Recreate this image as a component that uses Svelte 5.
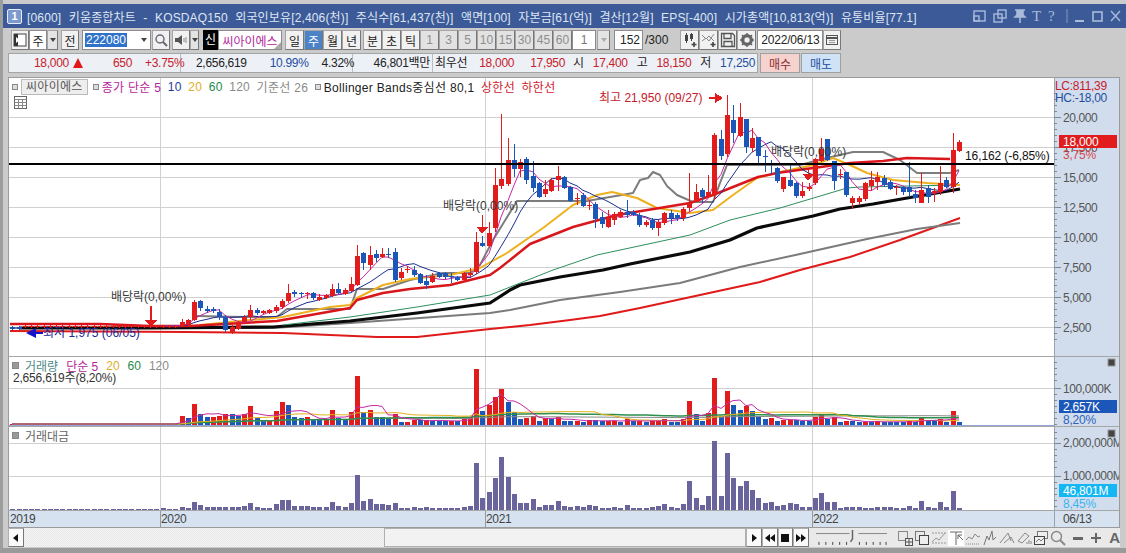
<script>
  // 주봉 데이터: [몸통위, 몸통아래, 고가, 저가, 양봉] (차트 픽셀 y)
  const tail = [
    [302,320,300,321,1],[301,308,300,311,0],[309,311,306,313,0],[309,311,307,313,0],[312,317,309,320,0],[317,330,315,332,0],
    [327,332,325,334,1],[322,329,321,330,1],[317,322,315,323,1],[310,317,305,320,1],[310,313,308,315,0],[311,313,310,314,1],
    [310,313,309,314,1],[307,311,305,313,1],[301,307,299,309,1],[293,301,284,303,1],[292,294,290,297,0],[293,294,292,298,0],
    [293,294,292,299,1],[293,298,292,300,0],[297,300,294,301,1],[295,298,294,299,1],[289,296,284,297,1],[289,293,283,294,0],
    [290,294,288,295,1],[284,291,277,292,1],[256,285,245,286,1],[253,263,252,270,0],[255,265,246,270,1],[254,258,250,262,0],
    [254,257,248,258,1],[254,255,248,258,0],[252,280,248,282,0],[272,278,268,280,1],[269,270,266,273,1],[270,275,266,277,0],
    [274,283,273,284,0],[281,285,275,289,0],[276,282,273,283,1],[273,277,272,278,0],[273,277,272,279,0],[276,277,273,283,0],
    [277,280,276,281,0],[273,280,272,282,1],[273,275,268,277,1],[242,272,232,274,1],
    [243,246,236,247,0],[233,246,222,247,1],[185,228,168,232,1],[179,186,114,189,1],[160,184,138,186,1],[160,169,144,177,0],
    [162,169,159,177,1],[159,180,157,184,0],[176,188,161,192,0],[183,197,182,198,0],[189,194,180,197,1],[180,191,178,192,1],
    [176,180,166,191,1],[177,188,176,189,0],[187,201,186,202,0],[198,199,193,205,1],[195,206,193,207,0],[205,206,200,210,1],
    [204,219,202,228,0],[217,224,212,228,0],[218,227,210,228,1],[214,220,212,225,1],[212,217,210,218,1],[212,215,200,218,0],
    [212,215,210,216,0],[215,225,213,227,0],[222,225,220,227,1],[220,228,218,230,0],[222,228,220,236,1],[213,223,212,225,1],
    [213,218,210,224,0],[215,218,213,221,0],[209,218,207,221,1],[203,208,173,212,1],
    [192,202,184,202,1],[190,197,188,203,0],[192,196,175,198,1],[135,195,133,200,1],[139,156,130,160,0],[115,154,95,157,1],
    [120,133,105,143,0],[117,136,103,137,1],[119,147,119,153,0],[138,148,128,152,1],[137,156,137,163,0],[156,157,150,172,0],
    [163,164,160,174,0],[168,181,167,183,0],[177,189,177,192,1],[180,186,163,187,0],[183,196,182,198,0],[191,196,182,198,1],
    [187,189,183,191,1],[159,183,158,185,1],[149,161,138,162,1],[139,160,139,161,0],[161,181,161,190,0],[174,175,169,179,1],
    [172,195,172,197,0],[198,203,196,209,1],[198,202,196,205,1],[183,199,182,201,1],[180,186,171,191,1],[177,182,172,190,1],
    [178,185,175,187,0],[182,189,180,190,0],[187,188,185,195,1],[187,192,186,195,0],[187,192,162,197,0],[194,198,190,203,0],
    [190,203,173,203,1],[188,197,185,203,0],[191,193,188,202,1],[183,192,166,195,1],[180,187,177,188,0],[150,187,133,193,1],
    [142,151,140,152,1]
  ];
  const head = Array.from({ length: 29 }, (_, i) =>
    i < 2 ? [327, 329, 326, 330, 0] : i === 27 ? [322, 326, 319, 327, 1] : i === 28 ? [320, 325, 319, 326, 1] : [326, 327, 325, 328, 1]
  );
  const candles = [...head, ...tail];
  const cx = (i) => Math.round(959 - 6.27 * (151 - i));

  // 거래량 (양수 빨강, 음수 파랑), 거래대금
  const vols = [
    21,-11,-8,8,9,11,-11,-9,11,19,-7,-5,5,14,23,-20,-8,-7,8,-5,-6,6,15,-7,-6,13,49,-13,15,-8,-8,-7,11,-3,3,5,-5,5,-4,-4,-4,4,-4,6,8,56,
    -14,20,28,36,-23,-13,-6,7,9,-4,7,-6,8,
    -4,-4,4,-3,5,-5,-4,4,4,-3,6,-4,4,-3,4,5,6,-3,-3,6,24,-11,-4,12,47,-9,34,-20,-15,19,-14,-8,-6,7,-4,5,5,-5,-4,-4,8,11,-6,8,-3,4,-4,-3,3,-3,
    4,-3,-3,-3,-3,4,-3,8,-4,-4,6,-3,14,-3
  ];
  const amts = [
    8,5,3,3,3,3,3,3,4,7,3,2,2,6,10,10,4,4,4,3,3,3,8,4,3,7,35,9,11,6,6,5,7,2,2,3,2,3,2,2,2,2,2,3,4,47,12,18,32,53,33,16,7,7,11,3,5,5,9,
    4,3,4,3,5,4,2,2,3,2,5,2,2,2,3,4,6,3,2,6,29,12,5,14,69,14,57,32,24,29,20,12,7,8,4,5,7,6,3,3,12,17,8,8,2,3,3,3,2,2,3,3,3,2,2,4,2,9,3,2,8,3,19,2
  ];
  const volume = Array.from({ length: 29 }, (_, i) => (i === 27 ? 9 : i === 28 ? -7 : 1)).concat(vols);
  const amount = Array.from({ length: 29 }, (_, i) => (i === 27 ? 3 : i === 28 ? 2 : i === 24 ? 2 : 1)).concat(amts);

  const closes = candles.map((c) => (c[4] ? c[0] : c[1]));
  function avg(values, n) {
    return values.map((_, i) => {
      const s = values.slice(Math.max(0, i - n + 1), i + 1);
      return s.reduce((a, b) => a + b, 0) / s.length;
    });
  }
  const pts = (ys, from = 0) => ys.map((y, i) => `${cx(i)},${y}`).slice(from).join(' ');
  const ma5 = pts(avg(closes, 5), 24);
  const ma10 = pts(avg(closes, 10), 24);

  const volAbs = volume.map(Math.abs);
  const volLine = (n) => pts(avg(volAbs, n).map((h) => 425 - h));

  // 나머지 지표선은 화면 좌표 그대로
  const lines = {
    lower: '10,331 187,332 283,333 377,337 417,337 490,329 530,325 570,320 600,316 640,308 700,295 760,282 800,270 850,257 900,240 960,218',
    gray120: '10,328 150,328 273,328 350,323 490,313 510,310 560,300 620,292 680,283 740,267 800,254 867,239 917,229 960,223',
    black: '20,328 150,328 273,327 350,321 417,313 490,303 510,290 520,285 560,277 603,270 630,264 690,252 730,240 757,228 785,222 813,216 840,209 873,204 913,197 960,189',
    green: '283,325 350,317 417,307 490,295 553,270 597,255 690,235 730,220 780,208 847,188 860,187 960,185',
    upper: '10,324 100,324 150,326 190,326 277,321 350,308 357,300 383,293 410,289 450,285 490,275 500,268 530,244 573,227 617,215 690,203 713,195 758,177 777,173 813,168 850,163 883,161 907,158 950,159',
    yellow: '200,325 250,320 283,317 330,307 350,305 357,298 383,285 410,279 450,275 480,268 507,253 543,228 573,205 597,195 612,192 637,198 657,208 690,213 713,210 733,195 757,178 780,172 813,165 833,158 850,165 867,173 893,180 927,183 960,185',
    base: '197,316 243,317 277,317 287,309 350,309 357,289 383,289 410,280 443,273 470,273 480,265 493,240 517,201 587,201 633,193 640,180 648,178 653,172 660,175 667,186 677,195 693,202 713,202 720,183 727,165 800,165 827,158 853,152 883,152 900,160 917,173 950,173 959,170'
  };

  const pricesAxis = [20000, 17500, 15000, 12500, 10000, 7500, 5000, 2500];
  const priceY = (p) => 357 - 0.012 * p;
  const fmt = (n) => n.toLocaleString('en-US');
  const minorTicks = Array.from({ length: 42 }, (_, i) => 93 + i * 6);
  const years = [160, 485, 812];
  const periods = ['1', '3', '5', '10', '15', '30', '45', '60'];
</script>

<div class="app">
  <header class="title">
    <span class="logo">1</span>
    <span class="caption">[0600] 키움종합차트 - KOSDAQ150 외국인보유[2,406(천)] 주식수[61,437(천)] 액면[100] 자본금[61(억)] 결산[12월] EPS[-400] 시가총액[10,813(억)] 유통비율[77.1]</span>
    <div class="winctl">
      <svg width="148" height="16" viewBox="0 0 148 16" fill="none" stroke="#a9bbdb" stroke-width="1.4">
        <rect x="1" y="3" width="11" height="10" /><rect x="1" y="8" width="5" height="5" />
        <rect x="25" y="2" width="8" height="8" /><rect x="21" y="6" width="8" height="8" />
        <path d="M42 2h10M44 2v5l-2 2h10l-2-2V2M47 9v6" stroke-width="1.6" fill="#a9bbdb" />
        <text x="59" y="13" class="tctl">T</text>
        <text x="75" y="13" class="tctl">?</text>
        <path d="M94 1v14" stroke="#6f87b5" />
        <path d="M102 13h9" stroke-width="2" />
        <rect x="120" y="4" width="9" height="9" stroke-width="1.6" />
        <path d="M138 3l9 10M147 3l-9 10" />
      </svg>
    </div>
  </header>

  <div class="bars">
    <div class="row first">
      <button class="btn ico w18">
        <svg width="14" height="14" viewBox="0 0 14 14"><rect x="1" y="1" width="12" height="12" fill="#fff" stroke="#444" /><rect x="1" y="1" width="4" height="12" fill="#333" /><path d="M7 7l-4-3v6z" fill="#fff" /></svg>
      </button>
      <span class="field w18 ctr">주</span>
      <button class="btn drop w11"><i class="arrow"></i></button>
      <button class="btn w18 gap3">전</button>
      <span class="field code gap3"><em>222080</em><i class="arrow push"></i></span>
      <button class="btn ico w18 gap1">
        <svg width="14" height="14" viewBox="0 0 14 14" fill="none" stroke="#667" stroke-width="1.4"><circle cx="6" cy="6" r="4" /><path d="M9 9l4 4" stroke-width="2" /></svg>
      </button>
      <button class="btn ico w18 gap2">
        <svg width="14" height="14" viewBox="0 0 14 14"><path d="M1 5h3l4-3v10l-4-3H1z" fill="#555" /><path d="M10 5v4M12 4v6" stroke="#888" /></svg>
      </button>
      <button class="btn drop w9"><i class="arrow"></i></button>
      <span class="sin">신</span>
      <span class="field name">씨아이에스<i class="corner"></i></span>
      <div class="seg gap3">
        <button class="btn s19">일</button><button class="btn s19 on">주</button><button class="btn s19">월</button><button class="btn s19">년</button>
      </div>
      <div class="seg gap2">
        <button class="btn s19">분</button><button class="btn s19">초</button><button class="btn s19">틱</button>
      </div>
      <div class="seg">
        {#each periods as p}<button class="btn s19 dim">{p}</button>{/each}
      </div>
      <span class="field w24 ctr dimtext">1</span>
      <button class="btn drop w13"><i class="arrow dimarrow"></i></button>
      <span class="field count">152</span>
      <span class="total">/300</span>
      <div class="seg gap12">
        <button class="btn ico s19"><svg width="16" height="16" viewBox="0 0 16 16"><path d="M3 3h3v6H3zM8 2h3v5H8z" fill="#444" /><path d="M4.5 1v10M9.5 1v8" stroke="#444" /><path d="M12 10v5M9.500 12.500h5" stroke="#444" stroke-width="1.600" /></svg></button>
        <button class="btn ico s19"><svg width="16" height="16" viewBox="0 0 16 16" fill="none" stroke="#888"><path d="M1 3l4 4 3-3 5 5" /><path d="M1 9l4-3 3 3 5-7" /><path d="M12 10v5M9.500 12.500h5" stroke="#444" stroke-width="1.600" /></svg></button>
        <button class="btn ico s19"><svg width="16" height="16" viewBox="0 0 16 16" fill="none" stroke="#555" stroke-width="1.300"><path d="M1.500 1.500h11l2 2v11h-13z" /><path d="M4 1.500v5h7v-5M4 14.500v-5h8v5" /></svg></button>
        <button class="btn ico s19"><svg width="16" height="16" viewBox="0 0 16 16"><circle cx="8" cy="8" r="4.500" fill="none" stroke="#666" stroke-width="3" /><path d="M8 1v14M1 8h14M3 3l10 10M13 3L3 13" stroke="#666" stroke-width="1.500" /><circle cx="8" cy="8" r="2.500" fill="#f2f2f2" /></svg></button>
      </div>
      <span class="field date">2022/06/13</span>
      <button class="btn ico s18">
        <svg width="14" height="14" viewBox="0 0 14 14" fill="none" stroke="#555"><rect x="1.500" y="2.500" width="11" height="9" /><path d="M1.500 5h11" stroke-width="2" /><path d="M4 7.500h6M4 9.500h6" stroke="#999" /></svg>
      </button>
    </div>

    <div class="row info">
      <div class="strip">
        <div class="cell c1">
          <b class="up n18">18,000</b><i class="tri"></i><b class="up n650">650</b><b class="up n375">+3.75%</b>
        </div>
        <div class="cell c2">
          <b class="n2656">2,656,619</b><b class="dn n1099">10.99%</b><b class="n432">4.32%</b>
        </div>
        <div class="cell c3"><b>46,801백만</b></div>
        <div class="cell c4">
          <b>최우선</b><b class="up n1">18,000</b><b class="up n2">17,950</b>
          <b class="k1">시</b><b class="up k2">17,400</b><b class="k3">고</b><b class="up k2">18,150</b><b class="k3">저</b><b class="dn k2">17,250</b>
        </div>
      </div>
      <button class="trade buy">매수</button>
      <button class="trade sell">매도</button>
    </div>
  </div>

  <div class="chart">
    <section class="pane main">
      <svg class="plot" viewBox="9 78 1045 278">
        {#each pricesAxis as p}<line class="grid" x1="9" x2="1054" y1={priceY(p)} y2={priceY(p)} />{/each}
        {#each years as x}<line class="grid" x1={x + 0.5} x2={x + 0.5} y1="78" y2="356" />{/each}

        <polyline class="l" stroke="#e01a1a" stroke-width="2" points={lines.lower} />
        <polyline class="l" stroke="#7b7b7b" stroke-width="2" points={lines.gray120} />
        <polyline class="l" stroke="#0a0a0a" stroke-width="3.200" points={lines.black} />
        <polyline class="l" stroke="#2d8f5c" stroke-width="1" points={lines.green} />
        <polyline class="l" stroke="#7d7d7d" stroke-width="2" points={lines.base} />
        <polyline class="l" stroke="#eeb01e" stroke-width="2" points={lines.yellow} />
        <polyline class="l" stroke="#d8161c" stroke-width="2.500" points={lines.upper} />
        <polyline class="l" stroke="#1c2f8e" stroke-width="1" points={ma10} />
        <polyline class="l" stroke="#c62aa6" stroke-width="1" points={ma5} />

        {#each candles as c, i}
          <rect class={c[4] ? 'r' : 'b'} x={cx(i)} y={c[2]} width="1" height={c[3] - c[2]} />
          <rect class={c[4] ? 'r' : 'b'} x={cx(i) - 2} y={c[0]} width="5" height={c[1] - c[0]} />
        {/each}

        <rect x="9" y="163" width="1045" height="2" fill="#000" />

        <polygon class="low-mark" points="26,333 36,328 36,338" />
        <rect class="low-mark" x="34" y="332" width="9" height="2" />
        <text class="t low" x="43" y="337">최저 1,975 (06/05)</text>

        <text class="t txt" x="111" y="301">배당락(0,00%)</text>
        <rect class="r" x="150" y="306" width="2" height="14" />
        <polygon class="r" points="145,320 157,320 151,327" />

        <text class="t txt" x="443" y="210">배당락(0,00%)</text>
        <rect class="r" x="482" y="215" width="1" height="12" />
        <polygon class="r" points="477,227 488,227 482,234" />

        <rect class="r" x="808" y="169" width="1" height="7" />
        <polygon class="r" points="803,174 814,174 808,181" />
        <text class="t txt" x="771" y="156">배당락(0,00%)</text>

        <text class="t top" x="599" y="102">최고 21,950 (09/27)</text>
        <rect class="r" x="709" y="97" width="8" height="2" />
        <polygon class="r" points="715,93 723,98 715,103" />

        <text class="t txt dark" x="965" y="160">16,162 (-6,85%)</text>
      </svg>
      <svg class="axis" viewBox="1054 78 65 278">
        {#each minorTicks as y}<line class="tick" x1="1054" x2="1057" y1={y + 0.5} y2={y + 0.5} />{/each}
        {#each pricesAxis as p}
          <line class="tick" x1="1054" x2="1061" y1={priceY(p)} y2={priceY(p)} />
          <text class="t ax" x="1063" y={priceY(p) + 5}>{fmt(p)}</text>
        {/each}
        <text class="t lc" x="1055" y="90">LC:811,39</text>
        <text class="t hc" x="1055" y="102">HC:-18,00</text>
        <rect class="r" x="1059" y="135" width="58" height="13" />
        <text class="t boxed" x="1063" y="146">18,000</text>
        <text class="t pct-up" x="1063" y="159">3,75%</text>
      </svg>
      <div class="legend">
        <i class="sq"></i><span class="stockbtn">씨아이에스</span>
        <i class="sq"></i><span class="mg">종가 단순 5</span>
        <span class="nv">10</span><span class="yl">20</span><span class="gn">60</span><span class="gy">120</span>
        <span class="gy">기준선 26</span>
        <i class="sq"></i><span class="bk">Bollinger Bands중심선 80,1</span>
        <span class="rd">상한선</span><span class="rd">하한선</span>
      </div>
      <svg class="tbl" width="13" height="13" viewBox="0 0 13 13" fill="#fff" stroke="#666"><rect x=".5" y=".5" width="12" height="12" /><path d="M.5 3.500h12M.5 6.500h12M.5 9.500h12M4.500 3.500v9M8.500 3.500v9" stroke="#888" /></svg>
    </section>

    <section class="pane vol">
      <svg class="plot" viewBox="9 357 1045 69">
        <line class="grid" x1="9" x2="1054" y1="388.500" y2="388.500" />
        {#each years as x}<line class="grid" x1={x + 0.5} x2={x + 0.5} y1="357" y2="426" />{/each}
        {#each volume as v, i}
          <rect class={v > 0 ? 'r' : 'b'} x={cx(i) - 2} y={425 - Math.abs(v)} width="5" height={Math.abs(v)} />
        {/each}
        <polyline class="l" stroke="#8a8a8a" stroke-width="1" points={volLine(120)} />
        <polyline class="l" stroke="#2d8f4c" stroke-width="1.500" points={volLine(60)} />
        <polyline class="l" stroke="#e3b21c" stroke-width="1" points={volLine(20)} />
        <polyline class="l" stroke="#c62aa6" stroke-width="1" points={volLine(5)} />
        <line x1="9" x2="1054" y1="425.500" y2="425.500" stroke="#2a4fb0" stroke-width="1" opacity=".5" />
      </svg>
      <svg class="axis" viewBox="1054 357 65 69">
        {#each [362, 368, 374, 380, 394, 400, 406, 412, 418, 424] as y}<line class="tick" x1="1054" x2="1057" y1={y + 0.5} y2={y + 0.5} />{/each}
        <line class="tick" x1="1054" x2="1061" y1="388.500" y2="388.500" />
        <text class="t ax" x="1063" y="393">100,000K</text>
        <rect class="b" x="1059" y="400" width="58" height="13" />
        <text class="t boxed" x="1063" y="411">2,657K</text>
        <text class="t pct-dn" x="1063" y="424">8,20%</text>
        <rect class="close" x="1108" y="359" width="7" height="7" />
      </svg>
      <div class="legend small">
        <i class="sq solid"></i><span class="te">거래량</span><span class="mg">단순 5</span>
        <span class="yl">20</span><span class="gn">60</span><span class="gy">120</span>
      </div>
      <div class="volnow">2,656,619주(8,20%)</div>
    </section>

    <section class="pane amt">
      <svg class="plot" viewBox="9 427 1045 83">
        <line class="grid" x1="9" x2="1054" y1="443.500" y2="443.500" />
        <line class="grid" x1="9" x2="1054" y1="476.500" y2="476.500" />
        {#each years as x}<line class="grid" x1={x + 0.5} x2={x + 0.5} y1="427" y2="510" />{/each}
        {#each amount as a, i}
          <rect class="bar" x={cx(i) - 2} y={510 - a} width="5" height={a} />
        {/each}
      </svg>
      <svg class="axis" viewBox="1054 427 65 83">
        {#each [432, 438, 449, 455, 461, 467, 482, 488, 494, 500, 506] as y}<line class="tick" x1="1054" x2="1057" y1={y + 0.5} y2={y + 0.5} />{/each}
        <line class="tick" x1="1054" x2="1061" y1="443.500" y2="443.500" />
        <line class="tick" x1="1054" x2="1061" y1="476.500" y2="476.500" />
        <text class="t ax" x="1063" y="447">2,000,000M</text>
        <text class="t ax" x="1063" y="480">1,000,000M</text>
        <rect class="cy" x="1059" y="484" width="58" height="13" />
        <text class="t boxed" x="1063" y="495">46,801M</text>
        <text class="t pct-cy" x="1063" y="508">8,45%</text>
        <rect class="close" x="1108" y="430" width="7" height="7" />
      </svg>
      <div class="legend small"><i class="sq solid"></i><span class="gy2">거래대금</span></div>
    </section>

    <section class="dates">
      <div class="years">
        <span class="y19">2019</span><span class="y20">2020</span><span class="y21">2021</span><span class="y22">2022</span>
      </div>
      <div class="today">06/13</div>
    </section>
  </div>

  <div class="scroller">
    <button class="sbtn w16"><svg width="8" height="10" viewBox="0 0 8 10"><path d="M6 1v8L1 5z" fill="#111" /></svg></button>
    <div class="track"><div class="thumb"></div></div>
    <button class="sbtn w16 lf"><svg width="8" height="10" viewBox="0 0 8 10"><path d="M2 1v8l5-4z" fill="#111" /></svg></button>
    <button class="sbtn w16"><svg width="12" height="10" viewBox="0 0 12 10"><path d="M6 1v8L1 5zM11 1v8L6 5z" fill="#111" /></svg></button>
    <button class="sbtn w16"><svg width="10" height="10" viewBox="0 0 10 10"><rect x="1" y="1" width="8" height="8" fill="#111" /></svg></button>
    <button class="sbtn w16"><svg width="12" height="10" viewBox="0 0 12 10"><path d="M1 1v8l5-4zM6 1v8l5-4z" fill="#111" /></svg></button>
    <svg class="slider" width="74" height="18" viewBox="0 0 74 18" fill="none" stroke="#888">
      <path d="M1 5.500h34M44 5.500h29" />
      <path d="M38 2v9l-2 3" stroke="#666" stroke-width="1.500" />
      <path d="M4 14v3M11 14v3M18 14v3M25 14v3M32 14v3M45 14v3M52 14v3M59 14v3M66 14v3M72 14v3" stroke="#444" />
    </svg>
    <div class="tools">
      <svg width="16" height="16" viewBox="0 0 16 16" fill="none" stroke="#888"><rect x="1.500" y="1.500" width="9" height="9" /><rect x="8.500" y="8.500" width="7" height="7" fill="#eee" stroke="#555" /><path d="M12 9v6M9 12h6" stroke="#555" /></svg>
      <svg width="16" height="16" viewBox="0 0 16 16" fill="none" stroke="#777"><rect x="1.500" y="1.500" width="9" height="9" /><rect x="5.500" y="5.500" width="9" height="9" fill="#eee" stroke="#444" /></svg>
      <svg width="16" height="16" viewBox="0 0 16 16" fill="none" stroke="#999"><path d="M1 3h14M1 13h14" stroke-dasharray="2 1" /><path d="M1 12l4-4 3 2 6-7" /></svg>
      <svg class="active" width="16" height="16" viewBox="0 0 16 16" fill="none" stroke="#666"><path d="M2 2h12M8 2v13M10 5l5 5M10 5h4M10 5v4" /></svg>
      <svg width="16" height="16" viewBox="0 0 16 16" fill="none" stroke="#888"><path d="M1 10l3-3 3 2 3-5 3 3 2-1" /><path d="M1 14h14" stroke-dasharray="1 1" /></svg>
      <svg width="16" height="16" viewBox="0 0 16 16" fill="none" stroke="#777"><path d="M2 15l3-9 2 4 3-9 1 9 3-3" /></svg>
      <svg width="16" height="16" viewBox="0 0 16 16" fill="none" stroke="#888"><path d="M1 13L9 3l3 8M5 13l7-6 3 6" /></svg>
      <svg width="16" height="16" viewBox="0 0 16 16" fill="none" stroke="#888"><path d="M2 11l7-8 4 3-7 7zM11 14v-2M13 14v-4M15 14v-3" /></svg>
      <svg width="16" height="16" viewBox="0 0 16 16" fill="none" stroke="#777"><rect x="4.500" y="1.500" width="10" height="7" fill="#eee" /><rect x="1.500" y="6.500" width="10" height="8" fill="#eee" stroke="#444" /><path d="M3 12l3-3 2 2 3-3" /></svg>
      <svg width="16" height="16" viewBox="0 0 16 16" fill="none" stroke="#888" stroke-width="1.400"><circle cx="6.500" cy="6.500" r="5" /><path d="M10 10l5 5" stroke-width="2" /></svg>
      <svg class="pm" width="12" height="16" viewBox="0 0 12 16"><rect x="1" y="7" width="10" height="3" fill="#666" /></svg>
      <svg class="pm" width="12" height="16" viewBox="0 0 12 16"><path d="M1 7h4V3h2v4h4v2H7v4H5V9H1z" fill="#666" /></svg>
      <span class="fa">A</span>
    </div>
  </div>
</div>

<style>
  :global(body) {
    margin: 0;
    background: #c9c9c9;
  }
  .app {
    width: 1126px;
    height: 553px;
    overflow: hidden;
    box-sizing: border-box;
    padding-top: 4px;
    background: #cbcbcb;
    border-left: 3px solid #9d9d9d;
    border-bottom: 5px solid #9a9a9a;
    font-family: "Liberation Sans", "Noto Sans CJK KR", sans-serif;
    font-size: 12px;
    color: #222;
    position: relative;
  }
  button {
    font: inherit;
    padding: 0;
    margin: 0;
    color: inherit;
  }

  /* 타이틀바 */
  .title {
    height: 24px;
    margin-left: -3px;
    display: flex;
    align-items: center;
    background: #3c5a98;
    color: #dfe6f3;
  }
  .logo {
    width: 13px;
    height: 13px;
    margin-left: 7px;
    border: 1px solid #e6edf8;
    border-radius: 2px;
    background: #7d9ace;
    color: #fff;
    font-size: 11px;
    font-weight: bold;
    text-align: center;
    line-height: 13px;
  }
  .caption {
    margin-left: 5px;
    white-space: nowrap;
    letter-spacing: 0.15px;
    word-spacing: 4px;
  }
  .winctl {
    margin-left: auto;
    margin-right: 5px;
    display: flex;
  }
  .tctl {
    font-family: "Liberation Serif", serif;
    font-size: 15px;
    fill: #a9bbdb;
    stroke: none;
  }

  /* 툴바 */
  .bars {
    padding: 2px 0 0 5px;
    display: flex;
    flex-direction: column;
    gap: 3px;
  }
  .row {
    display: flex;
    align-items: stretch;
    height: 20px;
  }
  .first { padding-left: 3px; }
  .btn {
    box-sizing: border-box;
    height: 20px;
    border: 1px solid #a4a4a4;
    border-right-color: #777;
    border-bottom-color: #777;
    background: #f1f1f1;
    display: flex;
    align-items: center;
    justify-content: center;
    font-size: 12px;
  }
  .ico svg { display: block; }
  .field {
    box-sizing: border-box;
    height: 20px;
    background: #fff;
    border: 1px solid #8c8c8c;
    display: flex;
    align-items: center;
  }
  .ctr { justify-content: center; }
  .w18 { width: 18px; }
  .w24 { width: 24px; }
  .w11 { width: 11px; }
  .w9 { width: 9px; }
  .w13 { width: 13px; margin-left: 1px; }
  .s19 { width: 19px; }
  .s18 { width: 18px; }
  .gap1 { margin-left: 1px; }
  .gap2 { margin-left: 2px; }
  .gap3 { margin-left: 3px; }
  .gap12 { margin-left: 12px; }
  .seg { display: flex; }
  .drop { background: #e4e4e4; }
  .arrow {
    width: 0;
    height: 0;
    border-left: 3.500px solid transparent;
    border-right: 3.500px solid transparent;
    border-top: 4px solid #444;
  }
  .dimarrow { border-top-color: #aaa; }
  .push { margin-left: auto; margin-right: 3px; }
  .code { width: 69px; padding-left: 2px; }
  .code em {
    font-style: normal;
    background: #2f73c9;
    color: #fff;
    line-height: 14px;
    padding: 0 1px;
  }
  .sin {
    width: 15px;
    margin-left: 4px;
    background: #000;
    color: #fff;
    text-align: center;
    line-height: 20px;
  }
  .name {
    width: 64px;
    color: #b3259a;
    justify-content: center;
    position: relative;
  }
  .corner {
    position: absolute;
    right: 0;
    bottom: 0;
    width: 0;
    height: 0;
    border-left: 7px solid transparent;
    border-bottom: 7px solid #aaa;
  }
  .on { background: #4c82c6; color: #fff; }
  .dim { color: #8e8e8e; background: #e2e2e2; }
  .dimtext { color: #777; }
  .count {
    width: 29px;
    margin-left: 4px;
    justify-content: flex-end;
    padding-right: 2px;
  }
  .total { margin-left: 2px; line-height: 20px; }
  .date {
    width: 66px;
    margin-left: 1px;
    justify-content: center;
    letter-spacing: -0.2px;
  }

  .info b { font-weight: normal; letter-spacing: -0.3px; }
  .strip {
    width: 750px;
    box-sizing: border-box;
    display: flex;
    background: #edf1f6;
    border: 1px solid #a5a5a5;
    line-height: 18px;
  }
  .cell {
    position: relative;
    display: flex;
    box-sizing: border-box;
    border-right: 1px solid #bdbdbd;
  }
  .c1 { width: 172px; }
  .c2 { width: 172px; }
  .c3 { width: 80px; justify-content: flex-end; padding-right: 2px; }
  .c4 { flex: 1; border-right: 0; padding-left: 2px; }
  .up { color: #c8202c; }
  .dn { color: #1f4e9e; }
  .tri {
    width: 0;
    height: 0;
    margin: 4px 0 0 4px;
    border-left: 5px solid transparent;
    border-right: 5px solid transparent;
    border-bottom: 10px solid #e01818;
  }
  .n18 { margin-left: 25px; }
  .n650 { margin-left: 30px; }
  .n375 { margin-left: 13px; }
  .n2656 { margin-left: 15px; }
  .n1099 { margin-left: 23px; }
  .n432 { margin-left: 13px; }
  .n1 { margin-left: 12px; }
  .n2 { margin-left: 16px; }
  .k1 { margin-left: 8px; }
  .k2 { margin-left: 9px; }
  .k3 { margin-left: 9px; }
  .trade {
    width: 40px;
    height: 20px;
    box-sizing: border-box;
    border: 1px solid #a0a0a0;
    margin-left: 2px;
  }
  .buy { background: #f6d2ce; color: #8a2e30; }
  .sell { background: #cfe2f6; color: #1f4e9e; margin-left: 1px; }

  /* 차트 */
  .chart {
    box-sizing: content-box;
    width: 1110px;
    margin: 4px 0 0 5px;
    border: 1px solid #9b9b9b;
    background: #fff;
  }
  .pane {
    display: flex;
    position: relative;
    border-bottom: 1px solid #a6a6a6;
  }
  .main { height: 278px; }
  .vol { height: 69px; }
  .amt { height: 83px; }
  .plot {
    width: 1045px;
    height: 100%;
    display: block;
  }
  .axis {
    width: 65px;
    height: 100%;
    display: block;
    background: #d1dded;
    border-left: 0;
    box-shadow: inset 1px 0 0 #9aa4b0;
  }
  .grid { stroke: #d0d0d0; stroke-width: 1; shape-rendering: crispEdges; }
  .tick { stroke: #7f8893; stroke-width: 1; shape-rendering: crispEdges; }
  .l { fill: none; stroke-linejoin: round; }
  .r { fill: #e21c1c; shape-rendering: crispEdges; }
  .b { fill: #1b57b8; shape-rendering: crispEdges; }
  .cy { fill: #14b7f4; shape-rendering: crispEdges; }
  .bar { fill: #69659c; shape-rendering: crispEdges; }
  .close { fill: #444; stroke: #999; }
  .low-mark { fill: #1414c8; }
  .t {
    font-family: "Liberation Sans", "Noto Sans CJK KR", sans-serif;
    font-size: 12px;
  }
  .ax { fill: #555; letter-spacing: -0.4px; }
  .txt { fill: #3a3a3a; }
  .dark { fill: #111; letter-spacing: -0.1px; }
  .low { fill: #1b2a96; }
  .top { fill: #c4202c; }
  .lc { fill: #c8202c; letter-spacing: -0.3px; }
  .hc { fill: #1f4e9e; letter-spacing: -0.3px; }
  .boxed { fill: #fff; letter-spacing: -0.2px; }
  .pct-up { fill: #d8484c; letter-spacing: -0.2px; }
  .pct-dn { fill: #2f62b8; letter-spacing: -0.2px; }
  .pct-cy { fill: #3cb4ee; letter-spacing: -0.2px; }

  .legend {
    position: absolute;
    left: 3px;
    top: 1px;
    display: flex;
    align-items: center;
    gap: 6.500px;
    white-space: nowrap;
    height: 15px;
    letter-spacing: 0.3px;
  }
  .legend.small { gap: 8px; letter-spacing: 0; }
  .sq {
    width: 4px;
    height: 4px;
    border: 1px solid #888;
    background: #ddd;
    margin-right: -3.500px;
  }
  .sq.solid { width: 5px; height: 5px; background: #999; margin-right: -2px; }
  .stockbtn {
    background: #eee;
    border: 1px solid #bbb;
    color: #555;
    padding: 0 4px;
    line-height: 14px;
    margin-right: -1.500px;
  }
  .mg { color: #b3259a; }
  .nv { color: #1f3a9e; }
  .yl { color: #e0ae2c; }
  .gn { color: #1f8a4a; }
  .gy { color: #8a8a8a; }
  .gy2 { color: #666; }
  .bk { color: #222; }
  .rd { color: #d0202c; }
  .te { color: #4b8a88; }
  .tbl { position: absolute; left: 5px; top: 18px; }
  .volnow {
    position: absolute;
    left: 4px;
    top: 14px;
    line-height: 14px;
    color: #333;
    letter-spacing: -0.2px;
  }

  .dates {
    display: flex;
    height: 16px;
    background: #d6e2f0;
    color: #444;
    line-height: 16px;
    letter-spacing: -0.3px;
  }
  .years {
    width: 1045px;
    display: grid;
    grid-template-columns: 151px 325px 327px 1fr;
  }
  .years span { padding-left: 1px; box-shadow: inset 1px 0 0 #999; }
  .years .y19 { box-shadow: none; }
  .today { box-shadow: inset 1px 0 0 #9aa4b0; padding-left: 9px; flex: 1; }

  /* 하단 스크롤 */
  .scroller {
    display: flex;
    align-items: stretch;
    height: 19px;
    margin-left: 5px;
    width: 1112px;
    background: #e9e9e9;
  }
  .sbtn {
    box-sizing: border-box;
    border: 1px solid #b0b0b0;
    border-right-color: #777;
    border-bottom-color: #777;
    background: #fafafa;
    display: flex;
    align-items: center;
    justify-content: center;
  }
  .w16 { width: 16px; }
  .track {
    width: 727px;
    padding-left: 360px;
    box-sizing: border-box;
    background: repeating-conic-gradient(#f6f6f6 0 25%, #e6e6e6 0 50%) 0 0 / 2px 2px;
  }
  .thumb {
    height: 100%;
    box-sizing: border-box;
    border: 1px solid #b0b0b0;
    background: #f2f2f2;
  }
  .slider { margin: 0 0 0 6px; }
  .tools {
    margin-left: 9px;
    display: flex;
    align-items: center;
    gap: 1px;
  }
  .active { background: #fff; }
  .pm { margin-left: 5px; }
  .fa { margin-left: 6px; font-size: 15px; font-weight: bold; color: #666; }
</style>
